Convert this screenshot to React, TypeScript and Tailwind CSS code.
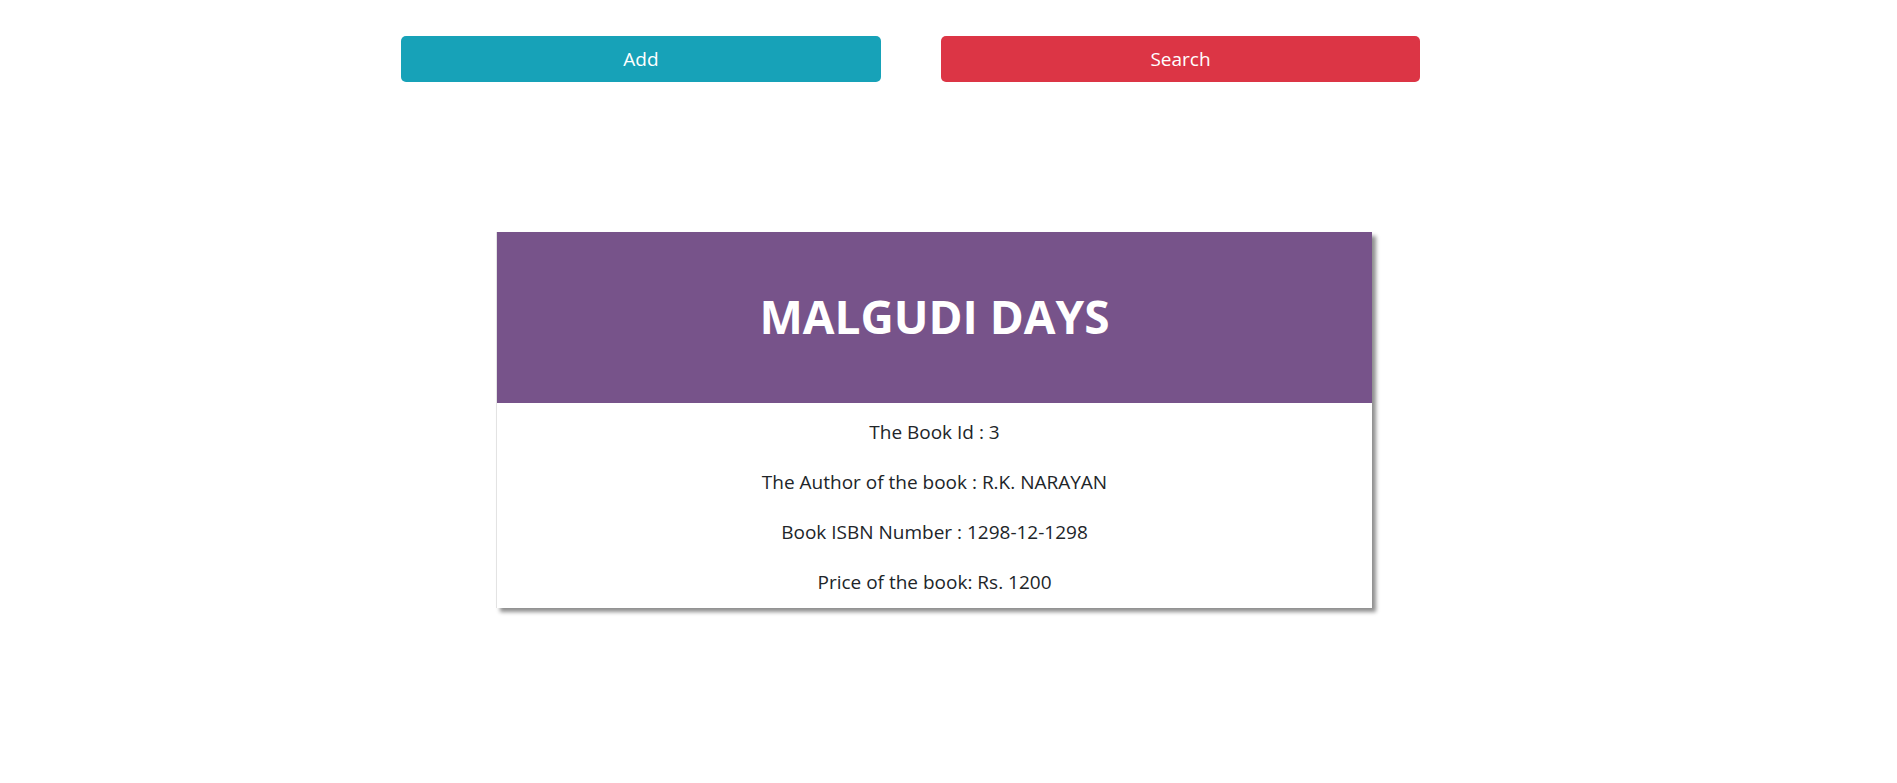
import React from 'react';

const book = {
  title: 'MALGUDI DAYS',
  id: 3,
  author: 'R.K. NARAYAN',
  isbn: '1298-12-1298',
  price: 1200,
};

const App: React.FC = () => {
  return (
    <div className="min-h-screen bg-white text-[#212529] font-['Open_Sans',sans-serif]">
      <div className="flex gap-[60px] pt-[36px] pl-[401px]">
        <button className="w-[480px] h-[46px] rounded-[5px] bg-[#17a2b8] text-white text-[19px]">
          Add
        </button>
        <button className="w-[479px] h-[46px] rounded-[5px] bg-[#dc3545] text-white text-[19px]">
          Search
        </button>
      </div>

      <div className="ml-[496px] mt-[150px] w-[876px] bg-white border-l border-[#e3e3e3] shadow-[4px_4px_4px_#8f8f8f]">
        <div className="h-[171px] bg-[#77538a] flex items-center justify-center">
          <h1 className="text-white text-[46px] font-bold leading-none pb-[4px]">{book.title}</h1>
        </div>
        <div className="flex flex-col items-center gap-[20px] pt-[14px] pb-[11px] text-[19px] leading-[30px]">
          <p>The Book Id : {book.id}</p>
          <p>The Author of the book : {book.author}</p>
          <p>Book ISBN Number : {book.isbn}</p>
          <p>Price of the book: Rs. {book.price}</p>
        </div>
      </div>
    </div>
  );
};

export default App;
